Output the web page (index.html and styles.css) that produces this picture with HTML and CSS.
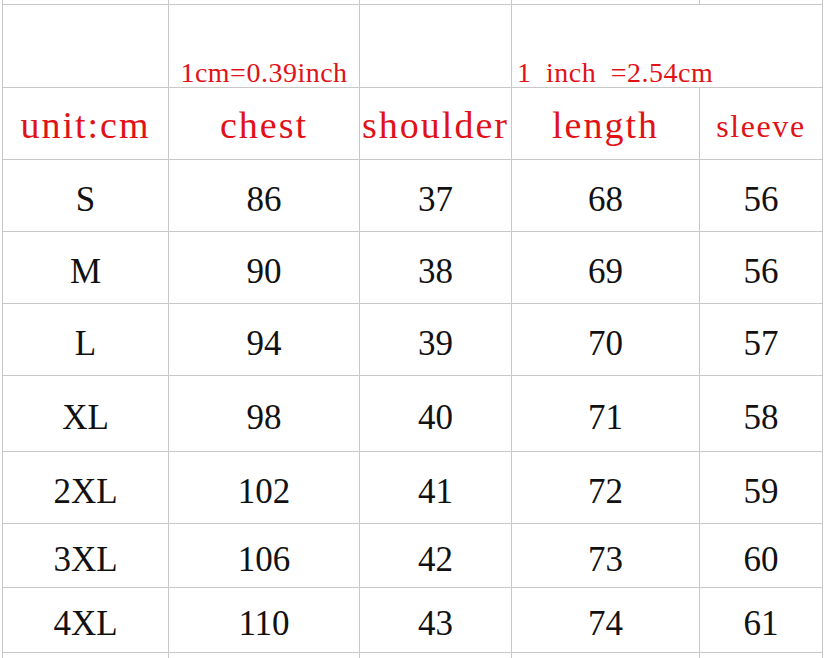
FILE: index.html
```html
<!DOCTYPE html>
<html>
<head>
<meta charset="utf-8">
<link rel="stylesheet" href="styles.css">
</head>
<body>
<table class="sheet">
  <colgroup>
    <col class="c1"><col class="c2"><col class="c3"><col class="c4"><col class="c5">
  </colgroup>
  <tr class="stub top"><td></td><td></td><td></td><td></td><td></td></tr>
  <tr class="note">
    <td></td>
    <td class="center">1cm=0.39inch</td>
    <td></td>
    <td colspan="2" class="left">1 inch =2.54cm</td>
  </tr>
  <tr class="head">
    <td>unit:cm</td><td>chest</td><td>shoulder</td><td>length</td><td class="small">sleeve</td>
  </tr>
  <tr class="data r72"><td>S</td><td>86</td><td>37</td><td>68</td><td>56</td></tr>
  <tr class="data r72"><td>M</td><td>90</td><td>38</td><td>69</td><td>56</td></tr>
  <tr class="data r72"><td>L</td><td>94</td><td>39</td><td>70</td><td>57</td></tr>
  <tr class="data r76"><td>XL</td><td>98</td><td>40</td><td>71</td><td>58</td></tr>
  <tr class="data r72"><td>2XL</td><td>102</td><td>41</td><td>72</td><td>59</td></tr>
  <tr class="data r64"><td>3XL</td><td>106</td><td>42</td><td>73</td><td>60</td></tr>
  <tr class="data r65"><td>4XL</td><td>110</td><td>43</td><td>74</td><td>61</td></tr>
  <tr class="stub bottom"><td></td><td></td><td></td><td></td><td></td></tr>
</table>
</body>
</html>
```
FILE: styles.css
```css
html, body {
  margin: 0;
  padding: 0;
  background: #ffffff;
  overflow: hidden;
}

.sheet {
  border-collapse: collapse;
  table-layout: fixed;
  width: 821px;
  margin-left: 2px;
  font-family: "Liberation Serif", "Times New Roman", serif;
}

.c1 { width: 166px; }
.c2 { width: 191px; }
.c3 { width: 152px; }
.c4 { width: 188px; }
.c5 { width: 123px; }

.sheet td {
  border: 1px solid #c8c8c8;
  padding: 0;
  text-align: center;
  vertical-align: middle;
  white-space: nowrap;
  overflow: visible;
}

.stub td {
  height: 4px;
  font-size: 0;
  line-height: 0;
}

.stub.top td { border-top: none; }
.stub.bottom td { height: 10px; border-bottom: none; }

.note td {
  height: 82px;
  vertical-align: bottom;
  color: #e01218;
  font-size: 28px;
  line-height: 1;
  letter-spacing: 0.5px;
  word-spacing: 7px;
  padding-bottom: 0;
}

.note td.left {
  text-align: left;
  padding-left: 5px;
}

.head { height: 72px; }

.head td {
  color: #e01218;
  font-size: 38px;
  letter-spacing: 2px;
  padding-top: 3px;
}

.head td.small {
  font-size: 32px;
  letter-spacing: 1.6px;
  padding-top: 6px;
}

.data td {
  color: #111111;
  font-size: 35px;
  padding-top: 8px;
}

.r72 { height: 72px; }
.r76 { height: 76px; }
.r64 { height: 64px; }
.r65 { height: 65px; }
```
